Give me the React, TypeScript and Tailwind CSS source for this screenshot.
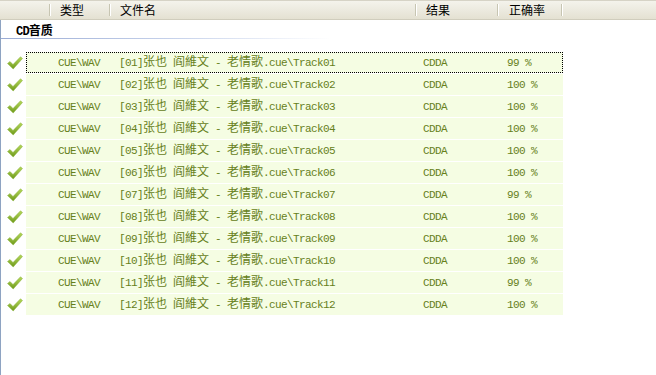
import React from 'react';

type Track = { no: string; rate: string };

const tracks: Track[] = [
  { no: '01', rate: '99 %' },
  { no: '02', rate: '100 %' },
  { no: '03', rate: '100 %' },
  { no: '04', rate: '100 %' },
  { no: '05', rate: '100 %' },
  { no: '06', rate: '100 %' },
  { no: '07', rate: '99 %' },
  { no: '08', rate: '100 %' },
  { no: '09', rate: '100 %' },
  { no: '10', rate: '100 %' },
  { no: '11', rate: '99 %' },
  { no: '12', rate: '100 %' },
];

// ASCII goes in a mono font at 6px per cell, CJK runs at 12px
const Mixed: React.FC<{ text: string }> = ({ text }) => {
  const parts = text.match(/[\u3400-\u9fff]+|[^\u3400-\u9fff]+/g) || [];
  return (
    <>
      {parts.map((p, i) =>
        /[\u3400-\u9fff]/.test(p) ? (
          <span key={i} className="text-[12px] leading-[12px] font-['Noto_Sans_CJK_SC',sans-serif]">
            {p}
          </span>
        ) : (
          <span key={i} className="text-[11px] leading-[12px] tracking-[-0.6px] whitespace-pre font-['Liberation_Mono',monospace]">
            {p}
          </span>
        )
      )}
    </>
  );
};

const Check: React.FC = () => (
  <svg width="16" height="14" viewBox="0 0 16 14">
    <defs>
      <linearGradient id="ck" x1="0" y1="0" x2="0" y2="1">
        <stop offset="0" stopColor="#b5d85a" />
        <stop offset="1" stopColor="#6f9a1c" />
      </linearGradient>
    </defs>
    <path d="M0.5 7.5 L3 5.5 L6 8.5 L13.5 0.8 L15.5 2.5 L6.2 13 Z" fill="url(#ck)" stroke="#8bb33a" strokeWidth="0.5" />
  </svg>
);

const HeaderCell: React.FC<{ w: string; label?: string; pad?: string }> = ({ w, label, pad = 'pl-[9px]' }) => (
  <div className={`${w} h-full flex items-center ${pad} relative`}>
    <span className="text-[12px] text-black">{label}</span>
    <div className="absolute right-0 top-[3px] bottom-[3px] w-[2px] border-l border-[#c7c5b2] bg-white" />
  </div>
);

const App: React.FC = () => {
  return (
    <div className="w-[656px] h-[375px] bg-white overflow-hidden font-['Noto_Sans_CJK_SC',sans-serif]">
      {/* column header */}
      <div className="h-[20px] flex border-t border-[#d6d3c6] border-b border-b-[#d0cdbd] bg-gradient-to-b from-[#f4f3ec] to-[#e4e1d2]">
        <HeaderCell w="w-[51px]" />
        <HeaderCell w="w-[60px]" label="类型" />
        <HeaderCell w="w-[306px]" label="文件名" pad="pl-[9px]" />
        <HeaderCell w="w-[82px]" label="结果" />
        <HeaderCell w="w-[64px]" label="正确率" pad="pl-[10px]" />
        <div className="flex-1" />
      </div>

      <div className="h-[355px] border-l border-[#8ea3c2]">
        {/* group title */}
        <div className="pt-[3px] pl-[15px] h-[18px] flex items-center">
          <span className="font-bold text-black text-[12px]">
            <span className="font-['Liberation_Mono',monospace] text-[12px] tracking-[-0.8px]">CD</span>音质
          </span>
        </div>
        <div className="h-[1px] w-[330px] bg-gradient-to-r from-[#9aabd4] via-[#c4d0ea] to-white" />

        <div className="pt-[12px]">
          {tracks.map((t, i) => (
            <div key={t.no} className="h-[22px] flex items-center">
              <div className="w-[25px] h-[22px] flex justify-center pl-[2px] pt-[5px]">
                <Check />
              </div>
              <div
                className={`w-[537px] h-[21px] flex items-center pb-[2px] leading-[12px] text-[#66801a] bg-[#f5fde3] ${
                  i === 0 ? 'border border-dotted border-black' : ''
                }`}
              >
                <div className={`${i === 0 ? 'w-[31px]' : 'w-[32px]'} shrink-0`} />
                <div className="w-[61px] shrink-0">
                  <Mixed text={'CUE\\WAV'} />
                </div>
                <div className="w-[304px] shrink-0 whitespace-nowrap">
                  <Mixed text={`[${t.no}]张也 阎維文 - 老情歌.cue\\Track${t.no}`} />
                </div>
                <div className="w-[84px] shrink-0">
                  <Mixed text="CDDA" />
                </div>
                <div className="flex-1">
                  <Mixed text={t.rate} />
                </div>
              </div>
            </div>
          ))}
        </div>
      </div>
    </div>
  );
};

export default App;
